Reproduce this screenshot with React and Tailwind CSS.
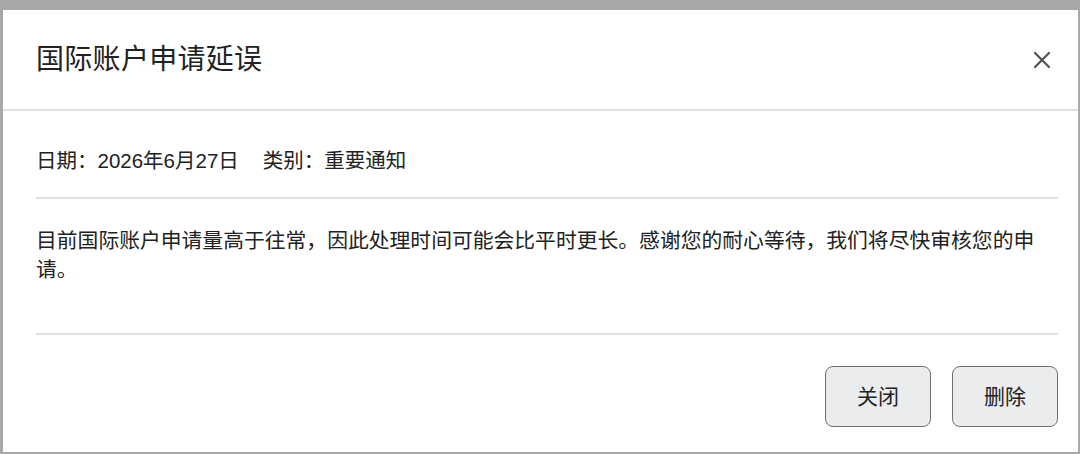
function CloseIcon() {
  return (
    <svg width="18" height="18" viewBox="0 0 18 18" fill="none" stroke="#555" strokeWidth="2.3" strokeLinecap="round">
      <path d="M2 2 L16 16 M16 2 L2 16" />
    </svg>
  );
}

function DialogButton({ children }) {
  return (
    <button className="flex h-[61px] w-[106px] items-center justify-center rounded-[8px] border-[1.5px] border-[#707070] bg-[#ebecee] text-[21px] text-[#222]">
      {children}
    </button>
  );
}

export default function App() {
  return (
    <div
      className="flex h-[454px] w-[1080px] flex-col bg-[#a8a8a8] pb-[2px] pl-[3px] pr-[2px] pt-[10px]"
      style={{ fontFamily: '"Liberation Sans", "Noto Sans CJK SC", sans-serif' }}
    >
      <div className="flex flex-1 flex-col bg-white text-[#222]">
        {/* header */}
        <div className="flex h-[101px] shrink-0 items-center justify-between border-b-2 border-[#e0e0e0] pl-[33px] pr-[24px]">
          <h1 className="text-[28px] leading-none tracking-[0.3px]">国际账户申请延误</h1>
          <button className="flex h-6 w-6 items-center justify-center">
            <CloseIcon />
          </button>
        </div>

        {/* body */}
        <div className="flex flex-1 flex-col pl-[33px] pr-[20px]">
          <div className="mt-[35px] flex gap-[24px] text-[20.5px] leading-[29px]">
            <span>日期：2026年6月27日</span>
            <span>类别：重要通知</span>
          </div>
          <div className="mt-[22px] h-[2px] bg-[#e0e0e0]" />
          <p className="mt-[27px] pr-[12px] text-[20.8px] leading-[29px]">
            目前国际账户申请量高于往常，因此处理时间可能会比平时更长。感谢您的耐心等待，我们将尽快审核您的申请。
          </p>
          <div className="mt-[49px] h-[2px] bg-[#e0e0e0]" />
          <div className="mt-[31px] flex justify-end gap-[21px]">
            <DialogButton>关闭</DialogButton>
            <DialogButton>删除</DialogButton>
          </div>
        </div>
      </div>
    </div>
  );
}
